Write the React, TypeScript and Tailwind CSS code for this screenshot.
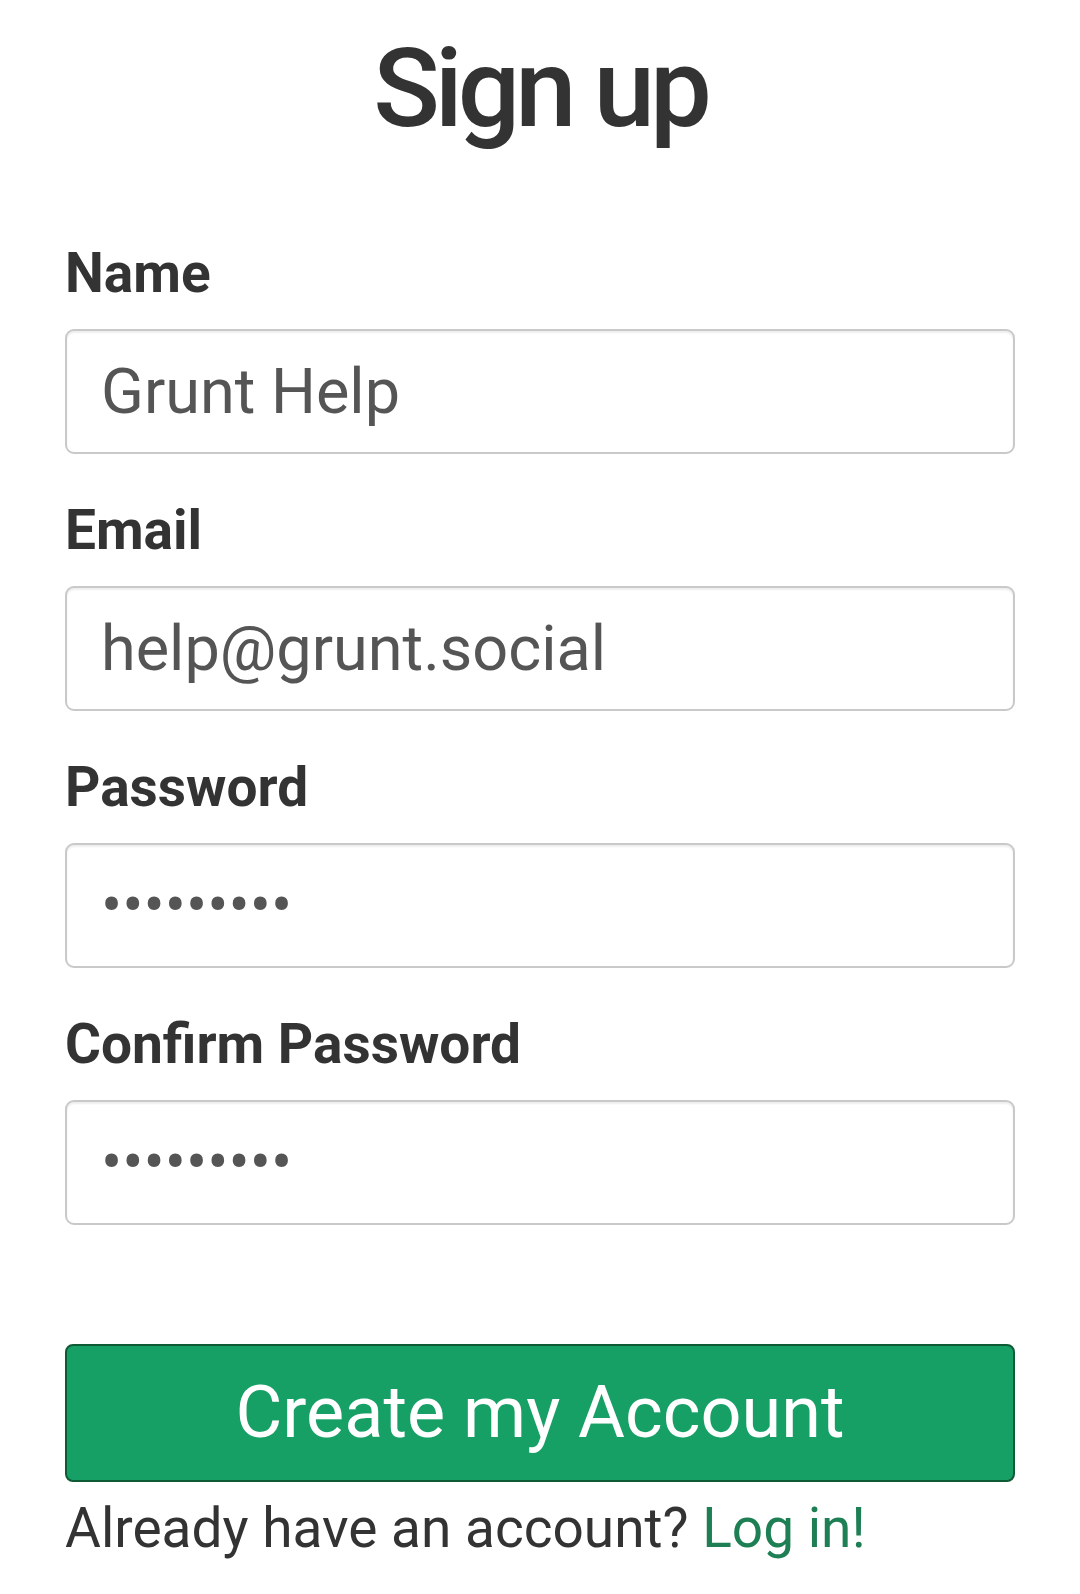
import React from 'react'

const fields = [
  { label: 'Name', type: 'text', value: 'Grunt Help' },
  { label: 'Email', type: 'email', value: 'help@grunt.social' },
  { label: 'Password', type: 'password', value: 'foobarbaz' },
  { label: 'Confirm Password', type: 'password', value: 'foobarbaz' },
]

export default function App() {
  return (
    <div className="min-h-[1594px] w-[1080px] bg-white px-[65px] font-['Roboto','Liberation_Sans',sans-serif] text-[#333]">
      <h1 className="pt-[34px] text-center text-[110px] font-medium leading-none tracking-[-5px]">Sign up</h1>

      <form className="mt-[102px] flex flex-col gap-[49px]" onSubmit={e => e.preventDefault()}>
        {fields.map(f => (
          <div key={f.label} className="flex flex-col">
            <label className="text-[55px] font-bold leading-none">{f.label}</label>
            <input
              type={f.type}
              value={f.value}
              readOnly
              className="mt-[28px] h-[125px] w-full rounded-[9px] border-[2.5px] border-[#c9c9c9] bg-white px-[34px] text-[63px] text-[#555] shadow-[inset_0_2px_2px_rgba(0,0,0,0.07)] outline-none"
            />
          </div>
        ))}
      </form>

      <button
        type="button"
        className="mt-[119px] flex h-[138px] w-full items-center justify-center rounded-[8px] border-[2.5px] border-[#0d5a35] bg-[#17a065] text-[72px] text-white"
      >
        Create my Account
      </button>

      <p className="mt-[19px] text-[55px] leading-none">
        Already have an account? <a href="#" className="text-[#1e7e54]">Log in!</a>
      </p>
    </div>
  )
}
